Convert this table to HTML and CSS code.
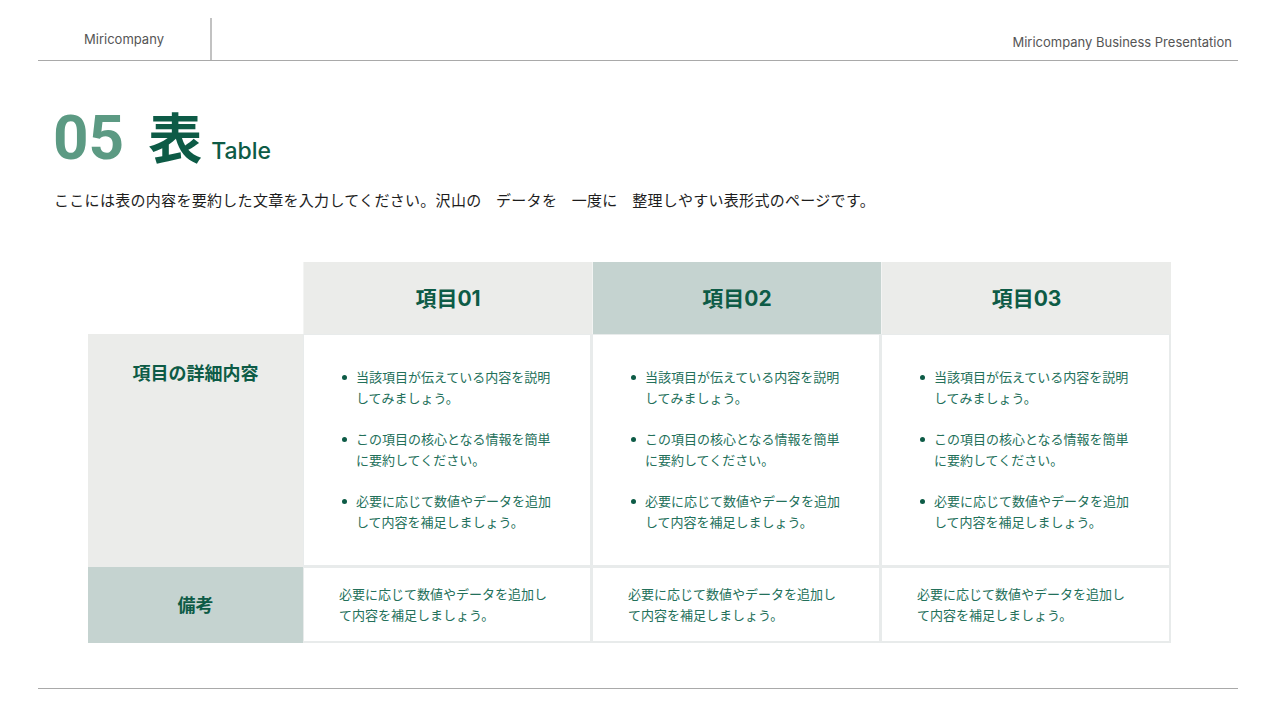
FILE: index.html
```html
<!DOCTYPE html>
<html lang="ja">
<head>
<meta charset="utf-8">
<title>Table</title>
<link rel="stylesheet" href="styles.css">
</head>
<body>
<div class="slide">
  <header class="top">
    <div class="brand">Miricompany</div>
    <div class="divider"></div>
    <div class="spacer"></div>
    <div class="deck">Miricompany Business Presentation</div>
  </header>

  <section class="heading">
    <div class="title">
      <span class="num">05</span>
      <span class="kanji">表</span>
      <span class="en">Table</span>
    </div>
    <p class="lead">ここには表の内容を要約した文章を入力してください。沢山の データを 一度に 整理しやすい表形式のページです。</p>
  </section>

  <div class="table-wrap">
    <div class="table">
      <div class="corner"></div>
      <div class="head">項目01</div>
      <div class="head head-hi">項目02</div>
      <div class="head">項目03</div>

      <div class="label label-top">項目の詳細内容</div>
      <div class="cell">
        <ul class="list">
          <li>当該項目が伝えている内容を説明してみましょう。</li>
          <li>この項目の核心となる情報を簡単に要約してください。</li>
          <li>必要に応じて数値やデータを追加して内容を補足しましょう。</li>
        </ul>
      </div>
      <div class="cell">
        <ul class="list">
          <li>当該項目が伝えている内容を説明してみましょう。</li>
          <li>この項目の核心となる情報を簡単に要約してください。</li>
          <li>必要に応じて数値やデータを追加して内容を補足しましょう。</li>
        </ul>
      </div>
      <div class="cell">
        <ul class="list">
          <li>当該項目が伝えている内容を説明してみましょう。</li>
          <li>この項目の核心となる情報を簡単に要約してください。</li>
          <li>必要に応じて数値やデータを追加して内容を補足しましょう。</li>
        </ul>
      </div>

      <div class="label label-hi">備考</div>
      <div class="cell note"><p>必要に応じて数値やデータを追加して内容を補足しましょう。</p></div>
      <div class="cell note"><p>必要に応じて数値やデータを追加して内容を補足しましょう。</p></div>
      <div class="cell note"><p>必要に応じて数値やデータを追加して内容を補足しましょう。</p></div>
    </div>
  </div>

  <footer class="bottom"></footer>
</div>
</body>
</html>
```

FILE: styles.css
```css
* { box-sizing: border-box; margin: 0; padding: 0; }
html, body { width: 1280px; height: 720px; background: #ffffff; overflow: hidden; }
body { font-family: Inter, "Noto Sans CJK JP", sans-serif; color: #222; }

.slide { width: 1280px; height: 720px; padding: 0 42px 0 38px; display: flex; flex-direction: column; }

.top { display: flex; align-items: stretch; height: 61px; padding-top: 18px; border-bottom: 1px solid #a9a9a9; }
.brand { width: 172px; text-align: center; font-size: 13px; color: #555; padding-top: 13px; }
.divider { width: 2px; background: #c2c2c2; }
.spacer { flex: 1; }
.deck { font-size: 13px; color: #555; padding-top: 16px; padding-right: 6px; }

.heading { padding: 40px 0 0 15px; }
.title { display: flex; align-items: baseline; height: 68px; }
.num { font-family: Roboto, Inter, sans-serif; font-size: 62px; font-weight: 700; color: #5c9a83; }
.kanji { font-family: "Noto Sans CJK JP", sans-serif; font-size: 54px; font-weight: 700; color: #0d5b46; margin-left: 24px; line-height: 1; }
.en { font-size: 23px; font-weight: 500; color: #0d5b46; margin-left: 9px; }
.lead { font-size: 15px; color: #1d1d1d; margin-top: 20px; padding-left: 1px; letter-spacing: 0.3px; word-spacing: 10px; }

.table-wrap { padding: 52px 0 0 50px; }
.table { display: grid; grid-template-columns: 215px 289px 289px 290px; grid-template-rows: 72px 233px 76px; }

.corner { background: #fff; }
.head { background: #ebecea; display: flex; align-items: center; justify-content: center; font-size: 21px; font-weight: 700; color: #0d5b46; border-left: 1px solid #f3f4f3; padding-bottom: 2px; }
.head-hi { background: #c5d3d0; }

.label { display: flex; justify-content: center; font-size: 18px; font-weight: 700; color: #0d5b46; }
.label-top { background: #ebecea; padding-top: 25px; align-items: flex-start; }
.label-hi { background: #c5d3d0; align-items: center; padding-bottom: 2px; }

.cell { background: #fff; border: 1px solid #e8ebeb; border-width: 1px 2px 2px 1px; color: #23705a; font-size: 13px; }
.list { list-style: none; padding: 32px 30px 0 37px; }
.list li { position: relative; padding-left: 15px; line-height: 21px; margin-bottom: 20px; }
.list li::before { content: ""; position: absolute; left: 1px; top: 8px; width: 5px; height: 5px; border-radius: 50%; background: #0d5b46; }
.note { display: flex; align-items: center; padding: 0 40px 0 35px; }
.note p { line-height: 21px; }

.bottom { margin-top: auto; margin-bottom: 31px; border-top: 1px solid #a9a9a9; height: 0; }
```
